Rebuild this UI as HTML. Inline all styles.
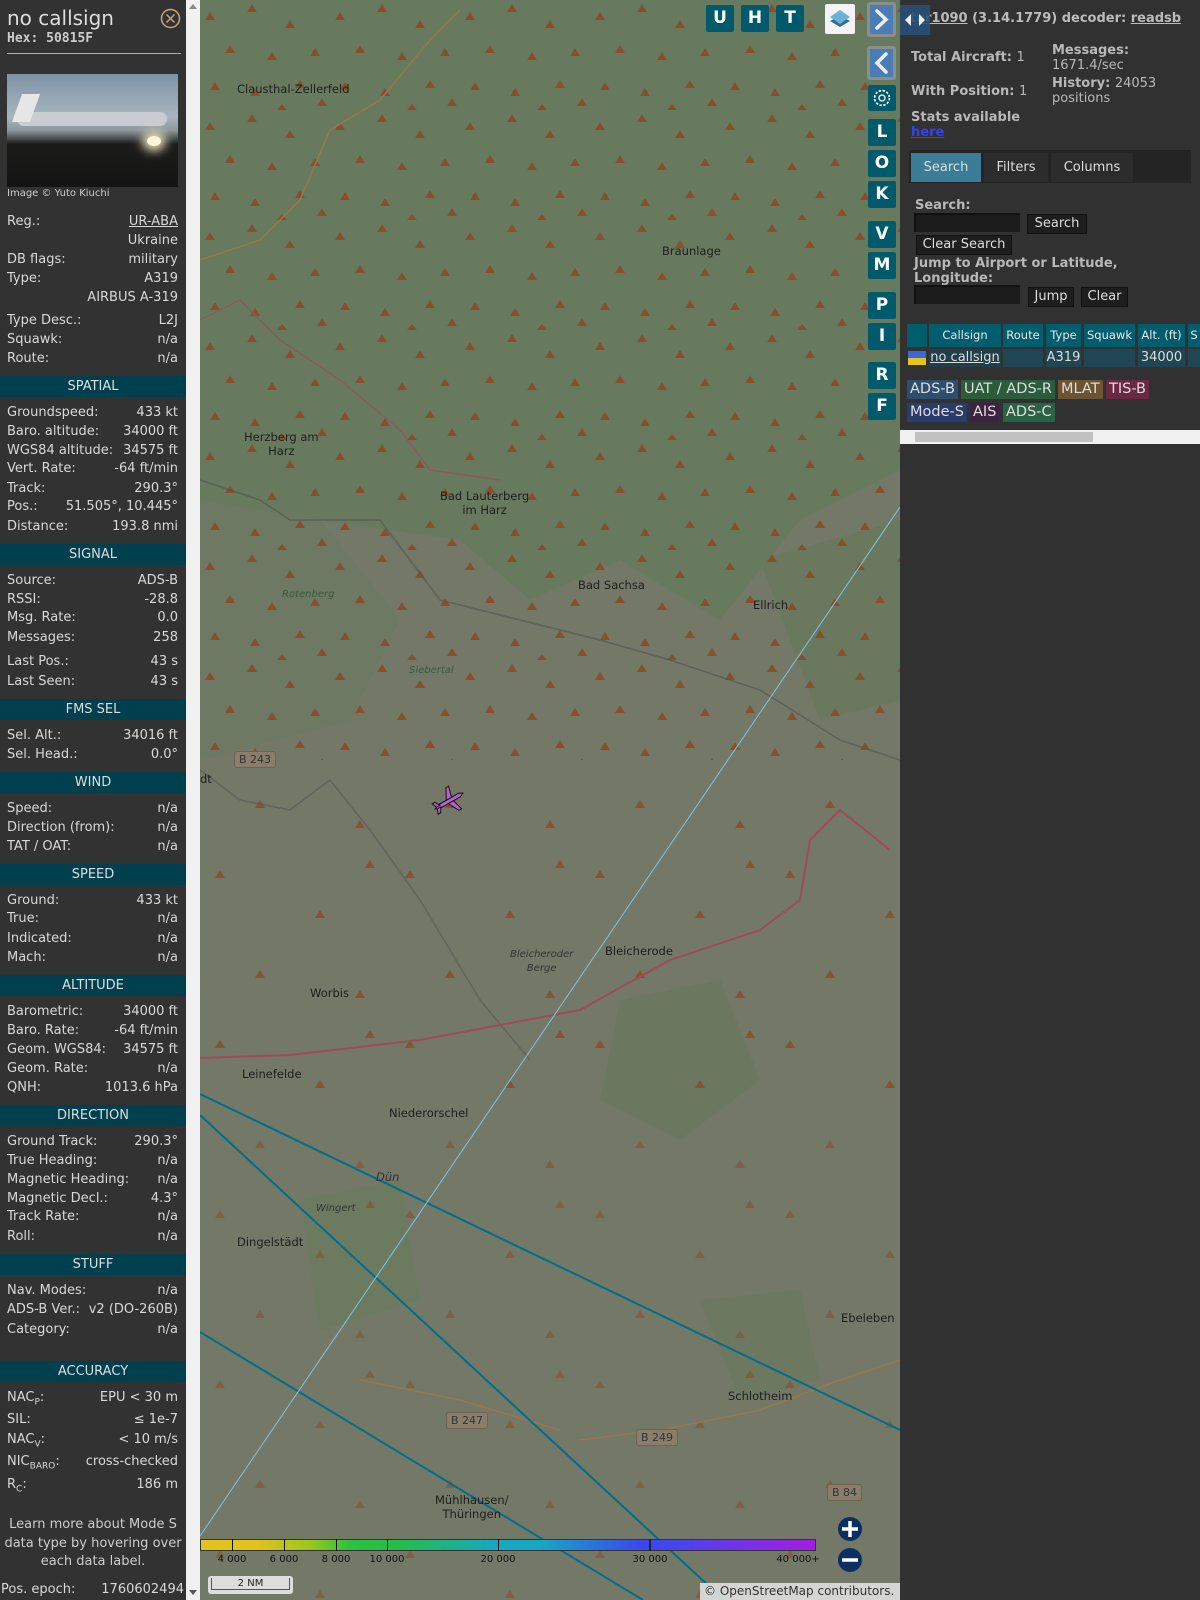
<!DOCTYPE html>
<html><head><meta charset="utf-8">
<style>
*{margin:0;padding:0;box-sizing:border-box}
body{width:1200px;height:1600px;overflow:hidden;background:#323232;font-family:"DejaVu Sans","Liberation Sans",sans-serif;font-size:13px;color:#d8d8d8;position:relative}
#left{position:absolute;left:0;top:0;width:186px;height:1600px;background:#323232}
#sb{position:absolute;left:186px;top:0;width:14px;height:1600px;background:#f1f1f1}
#sbt{position:absolute;left:188px;top:14px;width:10px;height:1470px;background:#c3c3c3}
.r{position:absolute;left:7px;width:171px;height:18px;line-height:18px;white-space:nowrap}
.r b{font-weight:normal;position:absolute;right:0;top:0}
.h{position:absolute;left:0;width:186px;height:21px;line-height:21px;background:#003f4d;text-align:center;color:#ddd}
#map{position:absolute;left:200px;top:0;width:700px;height:1600px;background:#727866;overflow:hidden}
.mb{position:absolute;width:28px;height:27px;background:#005a6c;color:#fff;font-weight:bold;font-size:17px;text-align:center;line-height:27px;border-radius:2px}
#right{position:absolute;left:900px;top:0;width:300px;height:1600px;background:#313131;color:#bbb}
.st{position:absolute;font-weight:bold;font-size:13px;color:#b8b8b8;line-height:15px;white-space:nowrap}
.btn{position:absolute;background:#1e1e1e;border:1px solid #111;color:#ddd;font-size:13px;text-align:center;line-height:18px}
.inp{position:absolute;background:#1b1b1b;border-top:2px solid #111;border-left:2px solid #111}
.th{position:absolute;top:324px;height:23px;line-height:23px;background:#005d6d;color:#e8e8e8;font-size:11.5px;text-align:center}
.td{position:absolute;top:349px;height:18px;line-height:18px;background:#1f4652;color:#ddd;font-size:13px;text-align:center}
.bd{position:absolute;height:19px;line-height:19px;font-size:14.5px;color:#ddd;padding:0 3px}
.tl{position:absolute;font-size:11.5px;color:#1e1e1e;white-space:nowrap;text-align:center;line-height:14px}
.rl{position:absolute;font-size:11px;color:#333;background:#8a7d6c;border:1px solid #6e6252;border-radius:3px;padding:0 4px;line-height:15px}
.cl{position:absolute;top:1554px;font-size:10px;color:#111;transform:translateX(-50%)}
.tk{position:absolute;top:1539px;width:1px;height:12px;background:#111}
</style></head><body>
<div id="left">
<div style="position:absolute;left:7px;top:5px;font-size:20px;color:#ddd;line-height:26px">no callsign</div>
<div style="position:absolute;left:7px;top:31px;font-family:'DejaVu Sans Mono',monospace;font-weight:bold;font-size:13px;color:#ccc">Hex: 50815F</div>
<svg style="position:absolute;left:160px;top:8px" width="21" height="21"><circle cx="10.5" cy="10.5" r="9" fill="none" stroke="#c8a57a" stroke-width="1.5"/><path d="M6.5 6.5L14.5 14.5M14.5 6.5L6.5 14.5" stroke="#c8a57a" stroke-width="1.5"/></svg>
<div style="position:absolute;left:7px;top:53px;width:174px;height:1px;background:#8ab8d0"></div>
<div style="position:absolute;left:7px;top:74px;width:171px;height:113px;background:linear-gradient(#7e93a6 0%,#a7b5c0 38%,#8d979c 50%,#1b1b1a 62%,#141414 100%);overflow:hidden">
<div style="position:absolute;left:10px;top:38px;width:150px;height:14px;background:#c9ccd0;border-radius:8px"></div>
<div style="position:absolute;left:10px;top:20px;width:18px;height:28px;background:#e6e6e6;transform:skewX(-20deg)"></div>
<div style="position:absolute;left:140px;top:62px;width:14px;height:10px;background:#fff6d8;border-radius:50%;box-shadow:0 0 10px 5px #e9dcb8"></div>
</div>
<div style="position:absolute;left:7px;top:188px;font-size:10px;color:#ccc">Image © Yuto Kiuchi</div>

<div class="r" style="top:213px">Reg.:<b style="text-decoration:underline">UR-ABA</b></div>
<div class="r" style="top:232px"><b>Ukraine</b></div>
<div class="r" style="top:251px">DB flags:<b>military</b></div>
<div class="r" style="top:270px">Type:<b>A319</b></div>
<div class="r" style="top:289px"><b>AIRBUS A-319</b></div>
<div class="r" style="top:312px">Type Desc.:<b>L2J</b></div>
<div class="r" style="top:331px">Squawk:<b>n/a</b></div>
<div class="r" style="top:350px">Route:<b>n/a</b></div>
<div class="h" style="top:376px">SPATIAL</div>
<div class="r" style="top:404px">Groundspeed:<b>433 kt</b></div>
<div class="r" style="top:423px">Baro. altitude:<b>34000 ft</b></div>
<div class="r" style="top:442px">WGS84 altitude:<b>34575 ft</b></div>
<div class="r" style="top:460px">Vert. Rate:<b>-64 ft/min</b></div>
<div class="r" style="top:480px">Track:<b>290.3°</b></div>
<div class="r" style="top:498px">Pos.:<b>51.505°, 10.445°</b></div>
<div class="r" style="top:518px">Distance:<b>193.8 nmi</b></div>
<div class="h" style="top:544px">SIGNAL</div>
<div class="r" style="top:572px">Source:<b>ADS-B</b></div>
<div class="r" style="top:591px">RSSI:<b>-28.8</b></div>
<div class="r" style="top:609px">Msg. Rate:<b>0.0</b></div>
<div class="r" style="top:629px">Messages:<b>258</b></div>
<div class="r" style="top:653px">Last Pos.:<b>43 s</b></div>
<div class="r" style="top:673px">Last Seen:<b>43 s</b></div>
<div class="h" style="top:699px">FMS SEL</div>
<div class="r" style="top:727px">Sel. Alt.:<b>34016 ft</b></div>
<div class="r" style="top:746px">Sel. Head.:<b>0.0°</b></div>
<div class="h" style="top:772px">WIND</div>
<div class="r" style="top:800px">Speed:<b>n/a</b></div>
<div class="r" style="top:819px">Direction (from):<b>n/a</b></div>
<div class="r" style="top:838px">TAT / OAT:<b>n/a</b></div>
<div class="h" style="top:864px">SPEED</div>
<div class="r" style="top:892px">Ground:<b>433 kt</b></div>
<div class="r" style="top:910px">True:<b>n/a</b></div>
<div class="r" style="top:930px">Indicated:<b>n/a</b></div>
<div class="r" style="top:949px">Mach:<b>n/a</b></div>
<div class="h" style="top:975px">ALTITUDE</div>
<div class="r" style="top:1003px">Barometric:<b>34000 ft</b></div>
<div class="r" style="top:1022px">Baro. Rate:<b>-64 ft/min</b></div>
<div class="r" style="top:1041px">Geom. WGS84:<b>34575 ft</b></div>
<div class="r" style="top:1060px">Geom. Rate:<b>n/a</b></div>
<div class="r" style="top:1079px">QNH:<b>1013.6 hPa</b></div>
<div class="h" style="top:1105px">DIRECTION</div>
<div class="r" style="top:1133px">Ground Track:<b>290.3°</b></div>
<div class="r" style="top:1152px">True Heading:<b>n/a</b></div>
<div class="r" style="top:1171px">Magnetic Heading:<b>n/a</b></div>
<div class="r" style="top:1190px">Magnetic Decl.:<b>4.3°</b></div>
<div class="r" style="top:1208px">Track Rate:<b>n/a</b></div>
<div class="r" style="top:1228px">Roll:<b>n/a</b></div>
<div class="h" style="top:1254px">STUFF</div>
<div class="r" style="top:1282px">Nav. Modes:<b>n/a</b></div>
<div class="r" style="top:1301px">ADS-B Ver.:<b>v2 (DO-260B)</b></div>
<div class="r" style="top:1321px">Category:<b>n/a</b></div>
<div class="h" style="top:1361px">ACCURACY</div>
<div class="r" style="top:1389px">NAC<sub style="font-size:9px">P</sub>:<b>EPU &lt; 30 m</b></div>
<div class="r" style="top:1411px">SIL:<b>≤ 1e-7</b></div>
<div class="r" style="top:1431px">NAC<sub style="font-size:9px">V</sub>:<b>&lt; 10 m/s</b></div>
<div class="r" style="top:1453px">NIC<sub style="font-size:9px">BARO</sub>:<b>cross-checked</b></div>
<div class="r" style="top:1476px">R<sub style="font-size:9px">C</sub>:<b>186 m</b></div>
<div style="position:absolute;left:0;width:186px;top:1516px;text-align:center;line-height:18.5px;color:#ccc">Learn more about Mode S<br>data type by hovering over<br>each data label.</div>
<div class="r" style="top:1581px;left:1px;width:183px">Pos. epoch:<b>1760602494</b></div>
</div>
<div id="sb"><div id="sbt"></div>
<div style="position:absolute;left:3px;top:4px;border:4px solid transparent;border-bottom:5px solid #888;border-top:0"></div>
<div style="position:absolute;left:3px;top:1590px;border:4px solid transparent;border-top:5px solid #555;border-bottom:0"></div></div>

<div id="map">
<svg width="700" height="1600" style="position:absolute;left:0;top:0">
<defs>
<pattern id="tri" width="130" height="110" patternUnits="userSpaceOnUse">
<g fill="#8a4e2d">
<path d="M10 12l5 8h-10z"/><path d="M52 4l5 8h-10z"/><path d="M90 20l5 8h-10z"/><path d="M30 45l5 8h-10z"/><path d="M72 52l5 8h-10z"/><path d="M115 48l5 8h-10z"/><path d="M15 82l5 8h-10z"/><path d="M55 88l5 8h-10z"/><path d="M100 80l5 8h-10z"/><path d="M122 98l5 8h-10z"/><path d="M82 104l5 6h-10z"/>
</g></pattern>
<pattern id="tri2" width="190" height="170" patternUnits="userSpaceOnUse">
<g fill="#8a4e2d"><path d="M20 20l5 8h-10z"/><path d="M120 60l5 8h-10z"/><path d="M60 120l5 8h-10z"/><path d="M160 140l5 8h-10z"/><path d="M170 10l5 8h-10z"/></g></pattern>
</defs>
<rect width="700" height="1600" fill="#737867"/>
<path d="M0 0H700V470L600 520L520 620L420 560L330 600L260 540L120 520L0 500Z" fill="#687a5d"/>
<path d="M0 500L120 520L200 620L150 720L0 760Z" fill="#6d7962"/>
<path d="M560 560L700 520V700L620 720Z" fill="#6a795e"/>
<path d="M420 1000L520 980L560 1080L480 1140L400 1100Z" fill="#6b785f"/>
<path d="M500 1300L600 1290L620 1380L540 1400Z" fill="#6c7860"/>
<path d="M100 1200L200 1180L220 1300L120 1330Z" fill="#6c7a60"/>
<path d="M0 0H700V760H0Z" fill="url(#tri)"/>
<path d="M0 760H700V1100H0Z" fill="url(#tri2)" opacity="0.9"/>
<path d="M0 1100H700V1600H0Z" fill="url(#tri2)" opacity="0.6"/>
<g fill="none" stroke-width="1.5">
<path d="M0 260L60 240L100 200L130 130L180 100L230 40L260 10" stroke="#9a7650"/>
<path d="M0 480L60 500L90 520L180 520L240 600L320 620L400 640L470 660L560 690L640 740L700 760" stroke="#555" opacity=".7"/>
<path d="M0 770L40 800L90 810L130 780L170 830L220 900L280 1000L330 1060" stroke="#555" opacity=".6"/>
<path d="M0 320L40 300L80 340L140 380L200 430L230 470L300 480" stroke="#8b5b5b"/>
<path d="M0 1058L90 1055L220 1040L380 1010L470 960L560 930L600 900L610 840L640 810L690 850" stroke="#a04a55" stroke-width="2"/>
<path d="M380 1440L460 1430L560 1410L640 1380L700 1360" stroke="#9a7650"/>
<path d="M160 1380L260 1400L360 1430" stroke="#9a7650"/>
</g>
<g stroke="#006e8c" stroke-width="2" fill="none">
<path d="M0 1094L700 1430"/><path d="M0 1115L524 1600"/><path d="M0 1332L443 1600"/>
</g>
<path d="M0 1536L700 507" stroke="#7cc4e8" stroke-width="1" fill="none"/>
<g transform="translate(249 801) rotate(-30)" fill="#b860d0" stroke="#111" stroke-width="1">
<path d="M-16 0L-12 -2L12 -2L16 0L12 2L-12 2Z"/><path d="M-2 -2L4 -13L7 -13L4 -2Z"/><path d="M-2 2L4 13L7 13L4 2Z"/><path d="M-14 -1L-16 -6L-13 -6L-10 -1Z"/><path d="M-14 1L-16 6L-13 6L-10 1Z"/>
</g>
</svg>
<div class="tl" style="left:37px;top:82px">Clausthal-Zellerfeld</div>
<div class="tl" style="left:462px;top:244px">Braunlage</div>
<div class="tl" style="left:44px;top:430px">Herzberg am<br>Harz</div>
<div class="tl" style="left:240px;top:489px">Bad Lauterberg<br>im Harz</div>
<div class="tl" style="left:378px;top:578px">Bad Sachsa</div>
<div class="tl" style="left:553px;top:598px">Ellrich</div>
<div class="tl" style="left:209px;top:664px;font-style:italic;color:#3a5a3a;font-size:10px">Siebertal</div>
<div class="tl" style="left:82px;top:588px;font-style:italic;color:#3a5a3a;font-size:10px">Rotenberg</div>
<div class="tl" style="left:405px;top:944px">Bleicherode</div>
<div class="tl" style="left:310px;top:948px;font-style:italic;color:#333;font-size:10px">Bleicheroder<br>Berge</div>
<div class="tl" style="left:110px;top:986px">Worbis</div>
<div class="tl" style="left:42px;top:1067px">Leinefelde</div>
<div class="tl" style="left:189px;top:1106px">Niederorschel</div>
<div class="tl" style="left:176px;top:1170px;font-style:italic;color:#333">Dün</div>
<div class="tl" style="left:116px;top:1202px;font-style:italic;color:#333;font-size:10px">Wingert</div>
<div class="tl" style="left:37px;top:1235px">Dingelstädt</div>
<div class="tl" style="left:641px;top:1311px">Ebeleben</div>
<div class="tl" style="left:528px;top:1389px">Schlotheim</div>
<div class="tl" style="left:235px;top:1493px">Mühlhausen/<br>Thüringen</div>
<div class="tl" style="left:0;top:772px">dt</div>
<div class="rl" style="left:34px;top:751px">B 243</div>
<div class="rl" style="left:246px;top:1412px">B 247</div>
<div class="rl" style="left:436px;top:1429px">B 249</div>
<div class="rl" style="left:627px;top:1484px">B 84</div>
<div class="mb" style="left:506px;top:5px">U</div>
<div class="mb" style="left:541px;top:5px">H</div>
<div class="mb" style="left:576px;top:5px">T</div>
<div style="position:absolute;left:625px;top:4px;width:30px;height:30px;background:#f4f4f4;border-radius:2px">
<svg width="30" height="30"><path d="M5 17l10 6 10-6-10-5z" fill="#2f6e86"/><path d="M5 13l10-7 10 7-10 7z" fill="#6bb3d6"/></svg></div>
<div style="position:absolute;left:667px;top:2px;width:29px;height:35px;background:#4b7db5;border:3px solid #8a8f8c;border-radius:3px"><svg width="23" height="29"><path d="M7 6l9 8.5-9 8.5" stroke="#eee" stroke-width="3.5" fill="none" stroke-linecap="round"/></svg></div>
<div style="position:absolute;left:667px;top:46px;width:29px;height:34px;background:#4b7db5;border:3px solid #8a8f8c;border-radius:3px"><svg width="23" height="28"><path d="M16 5l-9 9 9 9" stroke="#eee" stroke-width="3.5" fill="none" stroke-linecap="round"/></svg></div>
<div class="mb" style="left:668px;top:85px;height:26px"><svg width="28" height="26"><circle cx="14" cy="13" r="3" fill="none" stroke="#fff" stroke-width="1.3"/><circle cx="14" cy="13" r="7" fill="none" stroke="#fff" stroke-width="2.5" stroke-dasharray="2.2 1.5"/><circle cx="14" cy="13" r="5.8" fill="none" stroke="#005a6c" stroke-width="1.5"/></svg></div>
<div class="mb" style="left:668px;top:119px">L</div>
<div class="mb" style="left:668px;top:150px">O</div>
<div class="mb" style="left:668px;top:181px">K</div>
<div class="mb" style="left:668px;top:221px">V</div>
<div class="mb" style="left:668px;top:252px">M</div>
<div class="mb" style="left:668px;top:292px">P</div>
<div class="mb" style="left:668px;top:323px">I</div>
<div class="mb" style="left:668px;top:362px">R</div>
<div class="mb" style="left:668px;top:393px">F</div>
<div style="position:absolute;left:0;top:1539px;width:616px;height:12px;border:1px solid #333;background:linear-gradient(90deg,#e2c21c 0%,#e2c21c 9%,#97c81c 18%,#2ec23e 24%,#26bc48 32%,#16a8c2 48%,#16a8c2 55%,#3c46ec 72%,#4a44ee 78%,#a41ee0 100%)"></div>
<div class="tk" style="left:32px"></div><div class="tk" style="left:84px"></div><div class="tk" style="left:136px"></div><div class="tk" style="left:187px"></div><div class="tk" style="left:298px"></div><div class="tk" style="left:449px;width:2px;background:#223"></div>
<div class="cl" style="left:32px">4 000</div><div class="cl" style="left:84px">6 000</div><div class="cl" style="left:136px">8 000</div><div class="cl" style="left:187px">10 000</div><div class="cl" style="left:298px">20 000</div><div class="cl" style="left:450px">30 000</div><div class="cl" style="left:598px">40 000+</div>
<svg style="position:absolute;left:636px;top:1516px" width="28" height="60"><circle cx="14" cy="13" r="12" fill="#0b2f63"/><path d="M6 13h16M14 5v16" stroke="#fff" stroke-width="3.5"/><circle cx="14" cy="44" r="12" fill="#0b2f63"/><path d="M6 44h16" stroke="#fff" stroke-width="3.5"/></svg>
<div style="position:absolute;left:8px;top:1576px;width:85px;height:18px;background:rgba(240,240,240,.85);border-radius:3px"><div style="position:absolute;left:3px;top:2px;width:79px;height:12px;border:1px solid #555;border-top:0;font-size:10px;text-align:center;line-height:11px;color:#222">2 NM</div></div>
<div style="position:absolute;left:500px;top:1583px;width:200px;height:17px;background:rgba(230,230,230,.85);font-size:12px;color:#333;line-height:17px;padding-left:4px;white-space:nowrap">© OpenStreetMap contributors.</div>
</div>

<div id="right">
<div class="st" style="left:10px;top:11px;font-size:13px;color:#bbb">t<u>ar1090</u> (3.14.1779) decoder: <u>readsb</u></div>
<div style="position:absolute;left:0;top:5px;width:30px;height:30px;background:rgba(40,80,120,.9)"><svg width="30" height="30"><path d="M5 15l6-6v12z M25 15l-6-6v12z" fill="#eee"/></svg></div>
<div class="st" style="left:11px;top:50px">Total Aircraft: <span style="font-weight:normal">1</span></div>
<div class="st" style="left:11px;top:84px">With Position: <span style="font-weight:normal">1</span></div>
<div class="st" style="left:11px;top:110px">Stats available<br><u style="color:#3344ee">here</u></div>
<div class="st" style="left:152px;top:43px">Messages:<br><span style="font-weight:normal">1671.4/sec</span></div>
<div class="st" style="left:152px;top:76px">History: <span style="font-weight:normal">24053<br>positions</span></div>
<div style="position:absolute;left:9px;top:150px;width:282px;height:33px;background:#242424"></div>
<div style="position:absolute;left:11px;top:153px;width:70px;height:29px;background:#3b7c96;color:#ddd;line-height:29px;text-align:center">Search</div>
<div style="position:absolute;left:84px;top:153px;width:64px;height:29px;background:#2c2c2c;color:#ddd;line-height:29px;text-align:center">Filters</div>
<div style="position:absolute;left:151px;top:153px;width:82px;height:29px;background:#2c2c2c;color:#ddd;line-height:29px;text-align:center">Columns</div>
<div class="st" style="left:15px;top:198px">Search:</div>
<div class="inp" style="left:14px;top:213px;width:106px;height:19px"></div>
<div class="btn" style="left:127px;top:214px;width:60px;height:20px">Search</div>
<div class="btn" style="left:16px;top:235px;width:96px;height:20px">Clear Search</div>
<div class="st" style="left:14px;top:256px">Jump to Airport or Latitude,<br>Longitude:</div>
<div class="inp" style="left:14px;top:285px;width:106px;height:19px"></div>
<div class="btn" style="left:128px;top:287px;width:46px;height:20px">Jump</div>
<div class="btn" style="left:181px;top:287px;width:47px;height:20px">Clear</div>
<div class="th" style="left:7px;width:20px"></div>
<div class="th" style="left:29px;width:72px">Callsign</div>
<div class="th" style="left:103px;width:40px">Route</div>
<div class="th" style="left:146px;width:35px">Type</div>
<div class="th" style="left:184px;width:51px">Squawk</div>
<div class="th" style="left:238px;width:47px">Alt. (ft)</div>
<div class="th" style="left:288px;width:12px">S</div>
<div style="position:absolute;left:8px;top:351px;width:18px;height:7px;background:#3a6ad8"></div>
<div style="position:absolute;left:8px;top:358px;width:18px;height:7px;background:#e6c21a"></div>
<div class="td" style="left:29px;width:72px;text-decoration:underline;background:#1f3f4a">no callsign</div>
<div class="td" style="left:103px;width:40px"></div>
<div class="td" style="left:146px;width:35px">A319</div>
<div class="td" style="left:184px;width:51px"></div>
<div class="td" style="left:238px;width:47px">34000</div>
<div class="td" style="left:288px;width:12px"></div>
<div class="bd" style="left:7px;top:380px;background:#2d4e6c">ADS-B</div>
<div class="bd" style="left:61px;top:380px;background:#2b5c3c">UAT / ADS-R</div>
<div class="bd" style="left:158px;top:380px;background:#6c5432">MLAT</div>
<div class="bd" style="left:206px;top:380px;background:#6a2842">TIS-B</div>
<div class="bd" style="left:7px;top:403px;background:#2a3c6c">Mode-S</div>
<div class="bd" style="left:70px;top:403px;background:#3e2244">AIS</div>
<div class="bd" style="left:103px;top:403px;background:#2a6244">ADS-C</div>
<div style="position:absolute;left:0;top:430px;width:300px;height:14px;background:#f1f1f1"></div>
<div style="position:absolute;left:15px;top:432px;width:178px;height:10px;background:#c1c1c1"></div>
</div>
</body></html>
